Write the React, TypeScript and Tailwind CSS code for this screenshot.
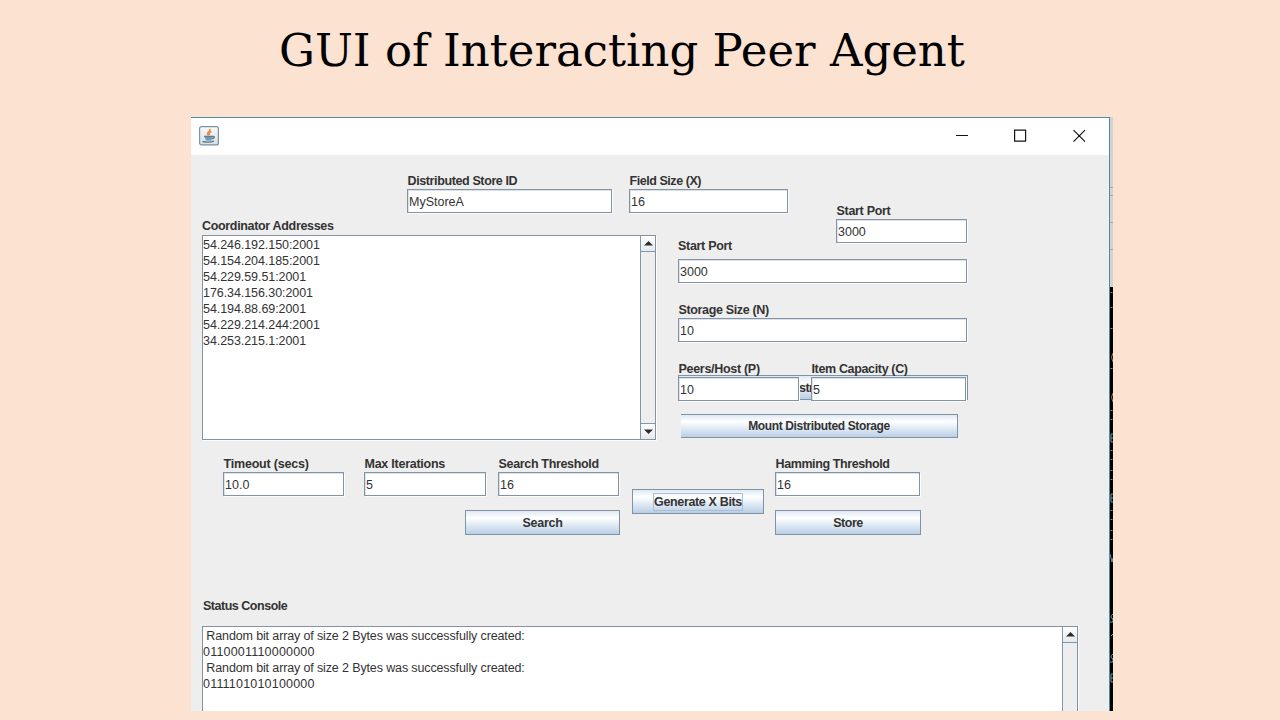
import type { ReactNode } from "react";

function Field({ label, value, className, labelStyle = "tracking-[-0.35px]" }: { label: string; value: string; className: string; labelStyle?: string }) {
  return (
    <div className={`shrink-0 ${className}`}>
      <div className={`h-4 pl-[0.5px] whitespace-nowrap text-[12.5px] leading-4 font-bold ${labelStyle}`}>{label}</div>
      <div className="h-6 border border-[#8493a3] bg-white pt-[4px] pl-[1px] text-[12.5px] leading-4 shadow-[1px_1px_0_#fafcfe,inset_1px_1px_0_#dbe3ea]">{value}</div>
    </div>
  );
}

function JavaButton({ className, children }: { className: string; children: ReactNode }) {
  return (
    <div
      className={`flex shrink-0 items-center justify-center border border-[#8093a5] bg-linear-to-b from-[#dfe9f3] via-white via-30% to-[#b9cfe6] text-[12.5px] leading-4 font-bold whitespace-nowrap ${className}`}
    >
      {children}
    </div>
  );
}

function Arrow({ down = false }: { down?: boolean }) {
  return (
    <div className="flex h-[15px] shrink-0 items-center justify-center bg-linear-to-b from-white to-[#e6e9ec]">
      <svg width="9" height="5" viewBox="0 0 9 5" className={down ? "rotate-180" : ""}>
        <path d="M4.5 0 9 4.5H0Z" fill="#2d2d2d" />
      </svg>
    </div>
  );
}

const addresses = [
  "54.246.192.150:2001",
  "54.154.204.185:2001",
  "54.229.59.51:2001",
  "176.34.156.30:2001",
  "54.194.88.69:2001",
  "54.229.214.244:2001",
  "34.253.215.1:2001",
];

const dashes = [15, 30, 51, 91, 133, 142, 173, 182, 193, 202, 233, 242, 253, 262];

export default function App() {
  return (
    <div className="flex h-[720px] w-[1280px] flex-col overflow-hidden bg-[#fce2d1] font-['Liberation_Sans',sans-serif] text-[#333333]">
      <h1 className="ml-[279px] h-[117px] w-[800px] shrink-0 pt-[21px] font-['DejaVu_Serif',serif] text-[45px] leading-[60px] whitespace-nowrap text-black">
        GUI of Interacting Peer Agent
      </h1>
      <div className="ml-[191px] flex h-[594px] w-[922px] shrink-0 overflow-hidden">
        <main className="flex w-[919px] shrink-0 flex-col border-t border-r border-[#4d8da0] bg-[#eeeeee]">
          <header className="flex h-[37px] shrink-0 items-center bg-white pb-[2px]">
            <svg width="20" height="20" viewBox="0 0 20 20" className="ml-2">
              <defs>
                <linearGradient id="cup" x2="0" y2="1">
                  <stop stopColor="#fafafa" />
                  <stop offset="1" stopColor="#d9dee2" />
                </linearGradient>
              </defs>
              <rect x=".6" y=".6" width="18.8" height="18.3" rx="2" fill="url(#cup)" stroke="#7892a6" strokeWidth="1.2" />
              <path d="M10.5 3C13 5 6 6.500 9.500 9.500M12.500 5.500C10 6.500 9.500 7.500 10.700 9" fill="none" stroke="#ee8a3c" strokeWidth="1.600" />
              <path d="M5 10.500h9M6 12.200h7.500M6.800 13.800h5.700M3.500 15.500q6 1.500 11.500-.3M14 10.300c2.200-.2 1.500 2-.8 2.500" fill="none" stroke="#547e9b" strokeWidth="1.300" />
            </svg>
            <svg width="132" height="14" viewBox="0 0 132 14" className="mr-[23px] ml-auto" fill="none" stroke="#151515" strokeWidth="1.200">
              <path d="M2 6.500h12M60.600 1.100h11v11h-11zM119.500 1.200l11.500 11.500M131 1.200l-11.500 11.500" />
            </svg>
          </header>

          <section className="flex h-[62px] shrink-0 items-start pt-[18px] pl-[216px]">
            <Field label="Distributed Store ID" value="MyStoreA" className="w-[205px]" labelStyle="tracking-[-0.38px]" />
            <Field label="Field Size (X)" value="16" className="ml-[17px] w-[159px]" labelStyle="tracking-[-0.45px]" />
            <Field label="Start Port" value="3000" className="mt-[30px] ml-[48px] w-[131px]" labelStyle="tracking-[-0.3px]" />
          </section>

          <section className="flex h-[239px] shrink-0">
            <div className="ml-[11px] w-[454px] shrink-0">
              <h2 className="h-[18px] pt-[1px] text-[12.5px] leading-[17px] font-bold tracking-[-0.33px]">Coordinator Addresses</h2>
              <div className="flex h-[205px] border border-[#8493a3] bg-white shadow-[1px_1px_0_#fafcfe]">
                <div className="flex-1 pt-[1px] text-[12.5px] leading-4 tracking-[-0.07px]">
                  {addresses.map((a) => (
                    <div key={a}>{a}</div>
                  ))}
                </div>
                <div className="flex w-[15px] flex-col justify-between border-l border-[#7f98ae] bg-[#eeeeee]">
                  <div className="border-b border-[#7f98ae]"><Arrow /></div>
                  <div className="border-t border-[#7f98ae]"><Arrow down /></div>
                </div>
              </div>
            </div>
            <div className="ml-[21px] w-[290px] shrink-0 pt-[20px]">
              <div className="h-[22px] pt-[1px] pl-[1px] text-[12.5px] leading-4 font-bold tracking-[-0.3px]">Start Port</div>
              <div className="ml-[1px] h-6 w-[289px] border border-[#8493a3] bg-white pt-[4px] pl-[1px] text-[12.5px] leading-4 shadow-[1px_1px_0_#fafcfe,inset_1px_1px_0_#dbe3ea]">3000</div>
              <Field label="Storage Size (N)" value="10" className="mt-[19px] ml-[1px]" />
              <div className="relative mt-[19px] ml-[1px] flex">
                <div className="absolute top-[14px] left-0 h-[25px] w-[290px] border border-[#8093a5] bg-linear-to-b from-[#dfe9f3] via-white via-30% to-[#b9cfe6]">
                  <span className="absolute top-[4px] left-[120px] text-[12.5px] leading-4 font-bold tracking-[-0.5px]">str</span>
                </div>
                <Field label="Peers/Host (P)" value="10" className="relative w-[121px]" labelStyle="tracking-[-0.3px]" />
                <Field label="Item Capacity (C)" value="5" className="relative ml-[12px] w-[155px]" />
              </div>
              <JavaButton className="mt-[13px] ml-[4px] h-6 w-[277px] border-l-0">
                <span className="text-[12px] tracking-[-0.36px]">Mount Distributed Storage</span>
              </JavaButton>
            </div>
          </section>

          <section className="flex h-[141px] shrink-0 pl-[31px]">
            <div className="w-[399px] shrink-0">
              <div className="flex">
                <Field label="Timeout (secs)" value="10.0" className="ml-[1px] w-[121px]" labelStyle="tracking-[-0.2px]" />
                <Field label="Max Iterations" value="5" className="ml-[20px] w-[122px]" labelStyle="tracking-[-0.25px]" />
                <Field label="Search Threshold" value="16" className="ml-[12px] w-[121px]" labelStyle="tracking-[-0.33px]" />
              </div>
              <JavaButton className="mt-[14px] ml-[243px] h-[25px] w-[155px] tracking-[-0.25px]">Search</JavaButton>
            </div>
            <JavaButton className="mt-[33px] ml-[11px] h-[25px] w-[132px]">
              <span className="border border-[#a9bfd6] tracking-[-0.35px]">Generate X Bits</span>
            </JavaButton>
            <div className="ml-[11px]">
              <Field label="Hamming Threshold" value="16" className="w-[145px]" labelStyle="tracking-[-0.4px]" />
              <JavaButton className="mt-[14px] h-[25px] w-[146px] tracking-[-0.45px]">Store</JavaButton>
            </div>
          </section>

          <section className="ml-[11px] w-[876px] flex-1">
            <h2 className="h-[29px] pt-[1px] pl-[1px] text-[12.5px] leading-4 font-bold tracking-[-0.48px]">Status Console</h2>
            <div className="flex h-[86px] border border-b-0 border-[#8493a3] bg-white shadow-[1px_0_0_#fafcfe]">
              <div className="flex-1 pt-[1px] text-[12.5px] leading-4 whitespace-pre">
                <div className="tracking-[-0.13px]"> Random bit array of size 2 Bytes was successfully created:</div>
                <div className="tracking-[0.2px]">0110001110000000</div>
                <div className="tracking-[-0.13px]"> Random bit array of size 2 Bytes was successfully created:</div>
                <div className="tracking-[0.2px]">0111101010100000</div>
              </div>
              <div className="w-[15px] border-l border-[#7f98ae] bg-[#eeeeee]">
                <div className="border-b border-[#7f98ae]"><Arrow /></div>
              </div>
            </div>
          </section>
        </main>

        <aside className="flex w-[3px] flex-col">
          <div className="h-[170px] shrink-0 bg-[#d2d2d4]">
            <svg width="3" height="170" stroke="#aaaaae">
              <path d="M0 70.500h3M0 78.500h3M0 105.500h3M0 132.500h3" />
            </svg>
          </div>
          <svg width="3" height="424" className="bg-black" fill="none" stroke="#858a8c">
            {dashes.map((y) => (
              <path key={y} d={`M.5 ${y - 9.5}h2`} />
            ))}
            <path d="M3 66q-3 4 0 9M3 106q-3 4 0 9" stroke="#a87b50" />
            <path d="M1 147v8M1 147h2M1 151h2M1 155h2M1 207v8M1 207h2M1 211h2M1 215h2M0 267l2 8 1-4M3 327q-4 3 0 5v3H0M1 349l2-2M3 367q-4 3 0 5v3H0M1 387v8M1 387h2M1 391h2M1 395h2" stroke="#7098ae" />
          </svg>
        </aside>
      </div>
    </div>
  );
}
